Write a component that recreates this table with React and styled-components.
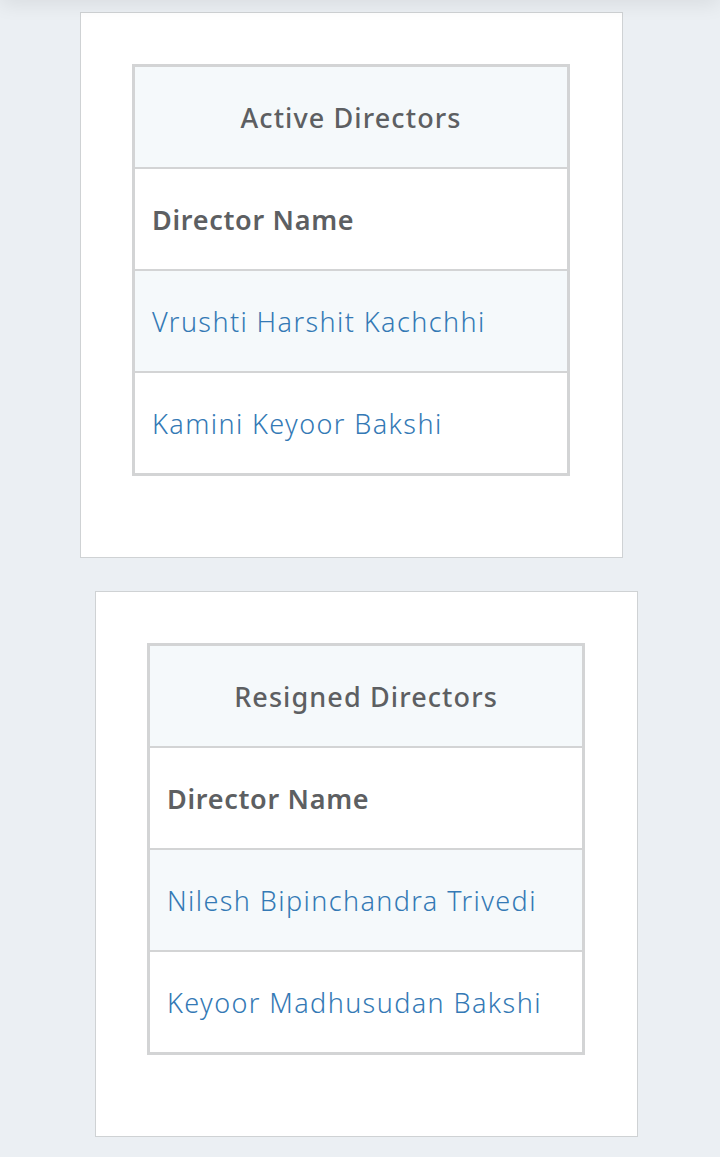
import React from "react";
import styled, { createGlobalStyle } from "styled-components";

const GlobalStyle = createGlobalStyle`
  body {
    margin: 0;
    background: #ebeff3;
    font-family: "Noto Sans", "Liberation Sans", sans-serif;
  }
`;

const TopShade = styled.div`
  position: fixed;
  top: -12px;
  left: 0;
  right: 0;
  height: 12px;
  box-shadow: 0 0 22px rgba(0, 0, 0, 0.14);
  pointer-events: none;
`;

const Page = styled.div`
  padding: 12px 0 20px;
  display: flex;
  flex-direction: column;
  gap: 33px;
`;

const Card = styled.div`
  width: 543px;
  box-sizing: border-box;
  margin-left: ${(p) => p.$offset}px;
  background: #fff;
  border: 1px solid #cfd2d4;
  padding: 51px 52px 81px 51px;
`;

const Table = styled.table`
  width: 100%;
  border-collapse: collapse;
  border: 3px solid #d3d4d5;
`;

const Cell = styled.td`
  height: 100px;
  padding: 0 0 0 17px;
  border-top: 2px solid #d3d4d5;
  font-size: 27px;
  background: ${(p) => (p.$shade ? "#f5f9fb" : "#fff")};
  color: ${(p) => (p.$link ? "#3479b5" : "#5d5f62")};
  font-weight: ${(p) => p.$weight || 400};
  letter-spacing: ${(p) => p.$track || 0}px;
  text-align: ${(p) => (p.$center ? "center" : "left")};
  padding-left: ${(p) => (p.$center ? 0 : 17)}px;
`;

const DirectorTable = ({ title, names }) => (
  <Table>
    <tbody>
      <tr>
        <Cell $shade $center $weight={500} $track={1.1}>{title}</Cell>
      </tr>
      <tr>
        <Cell $weight={600} $track={0.7}>Director Name</Cell>
      </tr>
      {names.map((n, i) => (
        <tr key={n}>
          <Cell $link $shade={i % 2 === 0} $weight={300} $track={1.4}>{n}</Cell>
        </tr>
      ))}
    </tbody>
  </Table>
);

export default function App() {
  return (
    <>
      <GlobalStyle />
      <TopShade />
      <Page>
        <Card $offset={80}>
          <DirectorTable
            title="Active Directors"
            names={["Vrushti Harshit Kachchhi", "Kamini Keyoor Bakshi"]}
          />
        </Card>
        <Card $offset={95}>
          <DirectorTable
            title="Resigned Directors"
            names={["Nilesh Bipinchandra Trivedi", "Keyoor Madhusudan Bakshi"]}
          />
        </Card>
      </Page>
    </>
  );
}
